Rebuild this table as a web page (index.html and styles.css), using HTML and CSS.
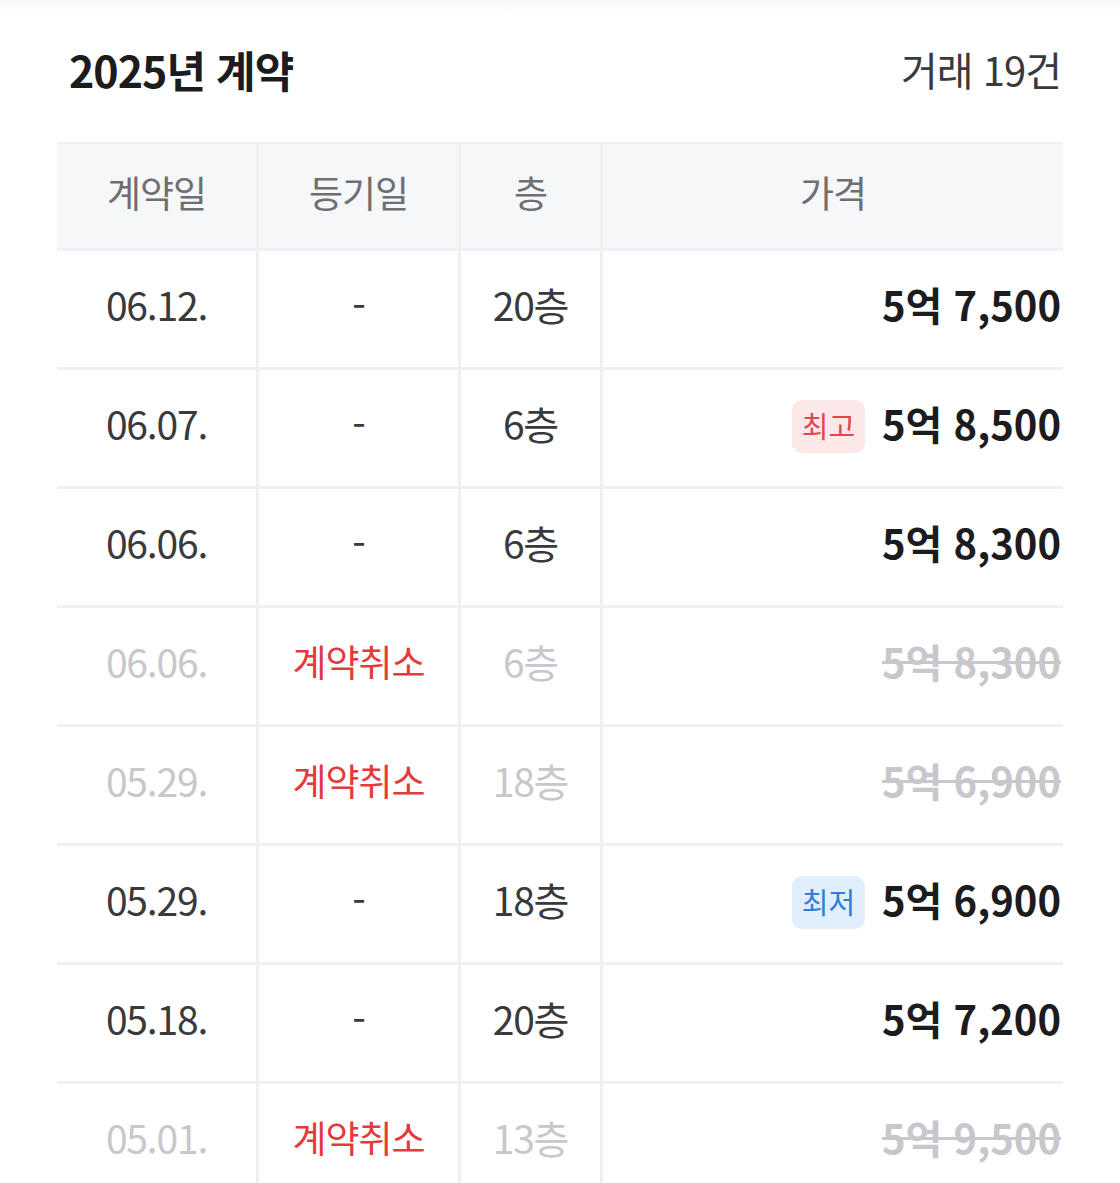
FILE: index.html
```html
<!DOCTYPE html>
<html lang="ko">
<head>
<meta charset="utf-8">
<link rel="stylesheet" href="styles.css">
</head>
<body>
<div class="topshade"></div>
<section class="panel">
  <div class="head">
    <h2 class="title">2025년 계약</h2>
    <span class="count">거래 19건</span>
  </div>
  <div class="grid">
    <div class="th">계약일</div>
    <div class="th">등기일</div>
    <div class="th">층</div>
    <div class="th">가격</div>

    <div class="td">06.12.</div>
    <div class="td">-</div>
    <div class="td">20층</div>
    <div class="td price"><span class="amt">5억 7,500</span></div>

    <div class="td">06.07.</div>
    <div class="td">-</div>
    <div class="td">6층</div>
    <div class="td price"><span class="badge high">최고</span><span class="amt">5억 8,500</span></div>

    <div class="td">06.06.</div>
    <div class="td">-</div>
    <div class="td">6층</div>
    <div class="td price"><span class="amt">5억 8,300</span></div>

    <div class="td muted">06.06.</div>
    <div class="td cancel">계약취소</div>
    <div class="td muted">6층</div>
    <div class="td price"><span class="amt struck">5억 8,300</span></div>

    <div class="td muted">05.29.</div>
    <div class="td cancel">계약취소</div>
    <div class="td muted">18층</div>
    <div class="td price"><span class="amt struck">5억 6,900</span></div>

    <div class="td">05.29.</div>
    <div class="td">-</div>
    <div class="td">18층</div>
    <div class="td price"><span class="badge low">최저</span><span class="amt">5억 6,900</span></div>

    <div class="td">05.18.</div>
    <div class="td">-</div>
    <div class="td">20층</div>
    <div class="td price"><span class="amt">5억 7,200</span></div>

    <div class="td muted">05.01.</div>
    <div class="td cancel">계약취소</div>
    <div class="td muted">13층</div>
    <div class="td price"><span class="amt struck">5억 9,500</span></div>
  </div>
</section>
</body>
</html>
```
FILE: styles.css
```css
html, body {
  margin: 0;
  padding: 0;
  background: #ffffff;
  font-family: "Noto Sans CJK KR", "Noto Sans", sans-serif;
  overflow: hidden;
}
.topshade {
  height: 12px;
  background: linear-gradient(#f7f7f7, #ffffff);
}
.panel {
  padding: 0 57px;
}
.head {
  display: flex;
  justify-content: space-between;
  align-items: center;
  height: 114px;
  padding: 0 2px 6px 12px;
}
.title {
  margin: 0;
  font-size: 43px;
  font-weight: 700;
  color: #1c1c1e;
  letter-spacing: -1px;
}
.count {
  font-size: 40px;
  color: #3a3a3c;
  letter-spacing: -1px;
}
.grid {
  display: grid;
  grid-template-columns: 199px 199px 139px 1fr;
  grid-template-rows: 104px;
  grid-auto-rows: 116px;
  gap: 3px;
  padding-top: 2px;
  background: #eff0f3;
  margin-top: 10px;
}
.th {
  background: #f6f7f9;
  color: #6e6e73;
  font-size: 37px;
  display: flex;
  align-items: center;
  justify-content: center;
  letter-spacing: -1px;
  padding-bottom: 8px;
  box-sizing: border-box;
}
.td {
  background: #ffffff;
  color: #3a3a3c;
  font-size: 39px;
  display: flex;
  align-items: center;
  justify-content: center;
  letter-spacing: -1.2px;
  padding-bottom: 10px;
  box-sizing: border-box;
}
.td.muted {
  color: #c7c7cc;
}
.td.cancel {
  color: #e5393b;
  font-size: 37px;
  letter-spacing: -1px;
}
.td.price {
  justify-content: flex-end;
  padding-right: 2px;
  gap: 17px;
}
.amt {
  font-size: 40px;
  font-weight: 700;
  color: #1c1c1e;
  letter-spacing: 0;
}
.amt.struck {
  color: #c7c7cc;
  text-decoration: line-through;
  text-decoration-thickness: 3px;
  text-decoration-color: #c7c7cc;
}
.badge {
  display: inline-flex;
  align-items: center;
  justify-content: center;
  width: 73px;
  height: 53px;
  border-radius: 10px;
  font-size: 29px;
  letter-spacing: 0;
  padding-bottom: 3px;
  box-sizing: border-box;
  margin-top: 6px;
}
.badge.high {
  background: #fde8e9;
  color: #e0464b;
}
.badge.low {
  background: #e1eefc;
  color: #2f7fd8;
}
```
